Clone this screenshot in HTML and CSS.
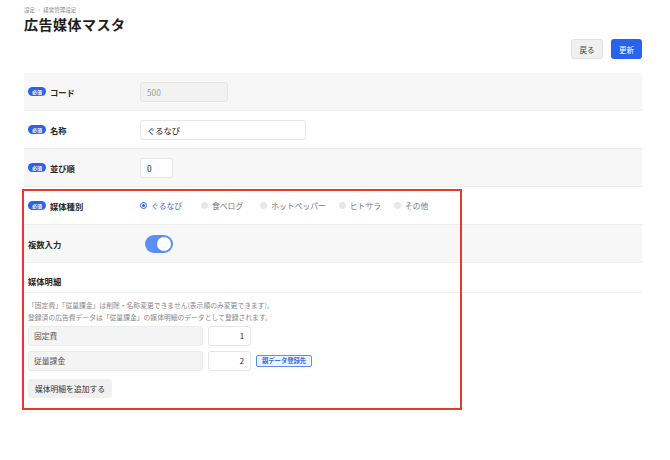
FILE: index.html
```html
<!DOCTYPE html>
<html lang="ja">
<head>
<meta charset="utf-8">
<link rel="stylesheet" href="styles.css">
</head>
<body>
<div class="page">
  <div class="crumb">設定 <span class="sep">›</span> 経営管理設定</div>
  <h1 class="title">広告媒体マスタ</h1>
  <div class="actions">
    <button class="btn btn-back">戻る</button>
    <button class="btn btn-primary">更新</button>
  </div>

  <div class="form">
    <div class="row alt">
      <div class="label"><span class="req">必須</span>コード</div>
      <div class="field"><div class="input disabled w-code">500</div></div>
    </div>
    <div class="row">
      <div class="label"><span class="req">必須</span>名称</div>
      <div class="field"><div class="input w-name">ぐるなび</div></div>
    </div>
    <div class="row alt">
      <div class="label"><span class="req">必須</span>並び順</div>
      <div class="field"><div class="input w-order">0</div></div>
    </div>
    <div class="row">
      <div class="label"><span class="req">必須</span>媒体種別</div>
      <div class="field radios">
        <span class="radio checked"><span class="dot"></span>ぐるなび</span>
        <span class="radio"><span class="dot"></span>食べログ</span>
        <span class="radio"><span class="dot"></span>ホットペッパー</span>
        <span class="radio"><span class="dot"></span>ヒトサラ</span>
        <span class="radio"><span class="dot"></span>その他</span>
      </div>
    </div>
    <div class="row alt">
      <div class="label plain">複数入力</div>
      <div class="field"><span class="toggle"><span class="knob"></span></span></div>
    </div>

    <div class="section">
      <div class="section-title">媒体明細</div>
      <div class="notes">
        <p>「固定費」「従量課金」は削除・名称変更できません(表示順のみ変更できます)。</p>
        <p>登録済の広告費データは「従量課金」の媒体明細のデータとして登録されます。</p>
      </div>
      <div class="detail">
        <div class="dname">固定費</div>
        <div class="dnum">1</div>
      </div>
      <div class="detail">
        <div class="dname">従量課金</div>
        <div class="dnum">2</div>
        <span class="tag">親データ登録先</span>
      </div>
      <button class="btn btn-add">媒体明細を追加する</button>
    </div>
    <div class="highlight"></div>
  </div>
</div>
</body>
</html>
```

FILE: styles.css
```css
* { box-sizing: border-box; }
html, body { margin: 0; padding: 0; background: #fff; }
body {
  font-family: "Noto Sans CJK JP", "Noto Sans", sans-serif;
  color: #222;
}
.page { padding: 6px 28px 0 24px; }
.crumb { font-size: 5.5px; color: #888; line-height: 8px; }
.crumb .sep { margin: 0 2px; }
.title {
  margin: 1px 0 0 0;
  font-size: 14px;
  font-weight: 700;
  line-height: 18px;
  letter-spacing: 0.5px;
  color: #1e1e1e;
}
.actions {
  display: flex;
  justify-content: flex-end;
  gap: 8px;
  margin-top: 6px;
}
.btn {
  font-family: inherit;
  font-size: 7.5px;
  height: 20px;
  border-radius: 3px;
  padding: 0 7px;
  border: 1px solid transparent;
  cursor: pointer;
}
.btn-back { background: #f0f0f0; border-color: #e2e2e2; color: #444; width: 32px; padding: 0; }
.btn-primary { background: #2862ef; color: #fff; width: 31px; padding: 0; }
.form { position: relative; margin-top: 14px; }
.row {
  display: flex;
  align-items: center;
  height: 38px;
  border-bottom: 1px solid #ededed;
  background: #fff;
}
.row.alt { background: #f7f7f7; }
.label {
  width: 116px;
  padding-left: 4px;
  display: flex;
  align-items: center;
  font-size: 8.3px;
  font-weight: 700;
  color: #2a2a2a;
}
.req {
  display: inline-flex;
  align-items: center;
  justify-content: center;
  background: #2862ef;
  color: #fff;
  font-size: 5px;
  height: 9px;
  width: 18px;
  border-radius: 4.5px;
  margin-right: 4px;
  font-weight: 700;
}
.field { display: flex; align-items: center; }
.input {
  height: 20px;
  border: 1px solid #e6e6e6;
  border-radius: 3px;
  background: #fff;
  font-size: 8.3px;
  line-height: 18px;
  padding: 0 6px;
  color: #222;
}
.input.disabled { background: #f2f2f2; color: #999; }
.w-code { width: 88px; }
.w-name { width: 166px; }
.w-order { width: 33px; }
.radios { padding-left: 0; }
.radio {
  display: inline-flex;
  align-items: center;
  font-size: 7.8px;
  color: #777;
}
.radio .dot {
  width: 7px;
  height: 7px;
  border-radius: 50%;
  background: #e8e8e8;
  border: 1px solid #e2e2e2;
  margin-right: 4px;
  position: relative;
}
.radio.checked { color: #3a6de8; margin-right: 19px; }
.radio.checked .dot {
  background: #fff;
  border: 1px solid #2862ef;
}
.radio.checked .dot::after {
  content: "";
  position: absolute;
  left: 1px; top: 1px;
  width: 3px; height: 3px;
  border-radius: 50%;
  background: #2862ef;
}
.radio:nth-child(2) { margin-right: 17px; }
.radio:nth-child(3) { margin-right: 13px; }
.radio:nth-child(4) { margin-right: 13px; }
.toggle {
  margin-left: 5px;
  width: 28px;
  height: 18px;
  border-radius: 9px;
  background: #5b8ef6;
  display: flex;
  align-items: center;
  justify-content: flex-end;
  padding: 0 2px;
}
.knob { width: 14px; height: 14px; border-radius: 50%; background: #fff; }
.section { padding: 0 0 12px 4px; }
.section-title {
  font-size: 8.3px;
  font-weight: 700;
  color: #2a2a2a;
  height: 30px;
  padding-top: 12px;
  line-height: 12px;
  border-bottom: 1px solid #ededed;
  margin-left: -4px;
  padding-left: 4px;
}
.notes { margin-top: 6px; }
.notes p { margin: 0; font-size: 6.8px; line-height: 12px; color: #888; }
.detail { display: flex; align-items: center; gap: 5px; }
.notes + .detail { margin-top: 3px; }
.detail + .detail { margin-top: 5px; }
.dname {
  width: 175px;
  height: 20px;
  background: #f4f4f4;
  border: 1px solid #ececec;
  border-radius: 3px;
  font-size: 7.8px;
  line-height: 18px;
  padding: 0 5px;
  color: #555;
}
.dnum {
  width: 43px;
  height: 20px;
  border: 1px solid #e6e6e6;
  border-radius: 3px;
  font-size: 7.8px;
  line-height: 18px;
  text-align: right;
  padding: 0 6px;
  color: #222;
}
.tag {
  border: 1px solid #5b8ef6;
  background: #eef4ff;
  color: #3a6de8;
  font-size: 6.3px;
  font-weight: 700;
  padding: 0 5px;
  height: 12px;
  line-height: 10px;
  border-radius: 2px;
}
.btn-add {
  margin-top: 8px;
  background: #f0f0f0;
  color: #333;
  font-size: 7.8px;
  width: 84px;
  height: 19px;
  padding: 0;
}
.highlight {
  position: absolute;
  left: -2px;
  top: 116px;
  width: 440px;
  height: 221px;
  border: 2px solid #e8382c;
  pointer-events: none;
}
```
